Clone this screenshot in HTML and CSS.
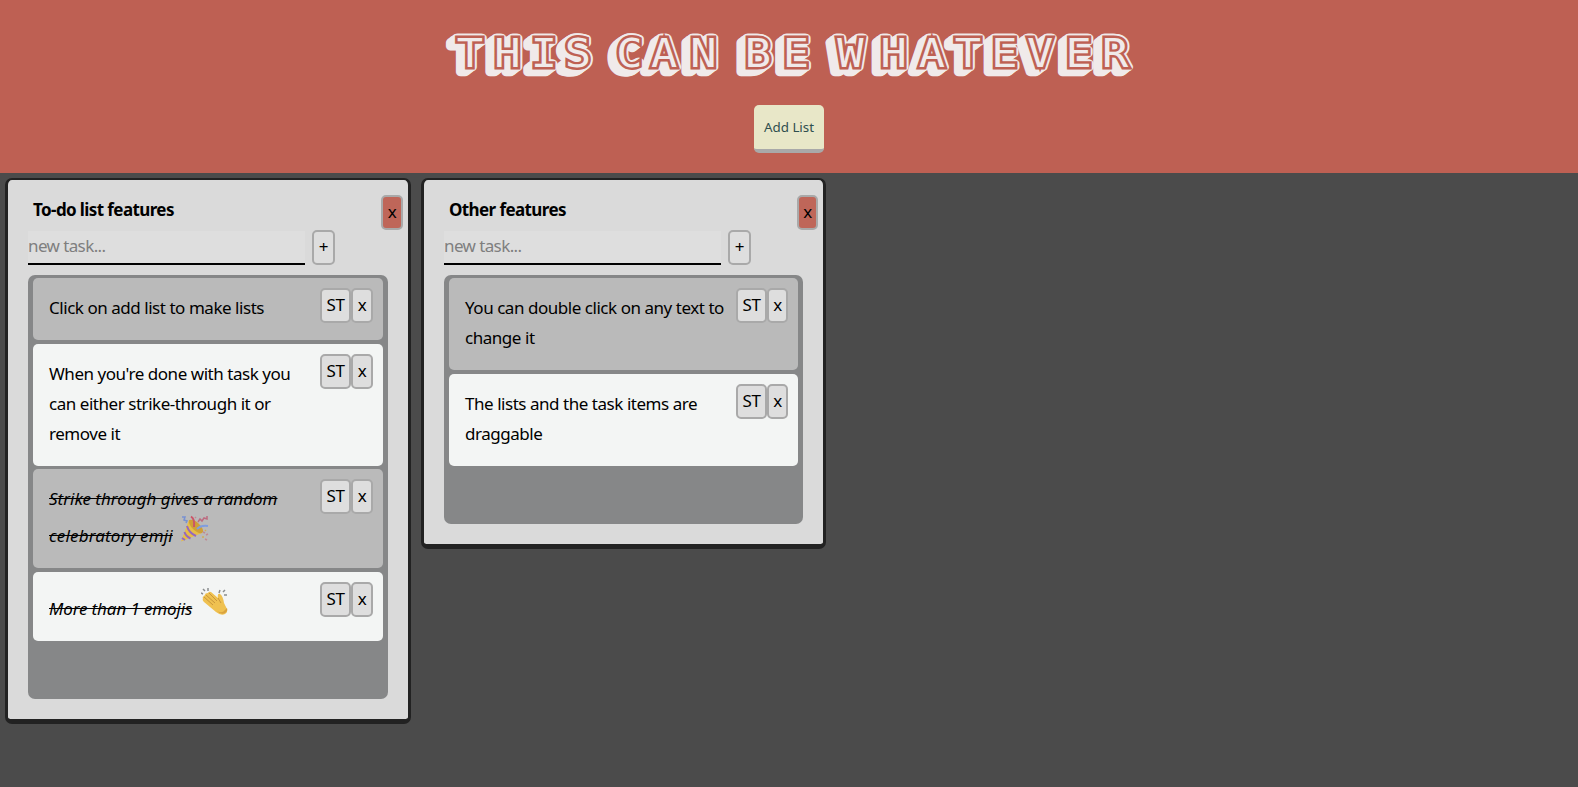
FILE: index.html
```html
<!DOCTYPE html>
<html lang="en">
<head>
<meta charset="utf-8">
<title>This can be whatever</title>
<link rel="stylesheet" href="styles.css">
</head>
<body>
<header class="header">
  <svg class="logo" width="700" height="60" viewBox="440 25 700 60" role="img">
    <defs>
      <g id="word" transform="scale(1.12 1)">
        <text y="66.8" x="419.5 453.1 485.7 516.1 540 562 592.9 628.1 650 676.8 710.7 740 759.4 797.8 832.1 864.3 896.9 928.6 963 995.6">THIS CAN BE WHATEVER</text>
      </g>
    </defs>
    <g class="shade">
      <use href="#word" x="-7" y="5.2"/><use href="#word" x="-6.500" y="4.6"/><use href="#word" x="-5.500" y="3.9"/><use href="#word" x="-4.500" y="3.3"/><use href="#word" x="-4" y="2.6"/><use href="#word" x="-3" y="2"/><use href="#word" x="-2" y="1.3"/><use href="#word" x="-1" y=".7"/><use href="#word"/>
    </g>
    <use class="face" href="#word"/>
  </svg>
  <button class="add-list">Add List</button>
</header>
<main class="board">
  <section class="list">
    <button class="btn btn-delete">x</button>
    <h2 class="list-title">To-do list features</h2>
    <form class="new-task"><input class="task-input" placeholder="new task..."><button class="btn btn-plus" type="button">+</button></form>
    <ul class="tasks">
      <li class="task"><div class="text"><p>Click on add list to make lists</p></div><div class="actions"><button class="btn btn-st">ST</button><button class="btn btn-x">x</button></div></li>
      <li class="task"><div class="text"><p>When you're done with task you</p><p>can either strike-through it or</p><p>remove it</p></div><div class="actions"><button class="btn btn-st">ST</button><button class="btn btn-x">x</button></div></li>
      <li class="task snug"><div class="text done"><p><s>Strike through gives a random</s></p><p class="with-emoji"><s>celebratory emji</s>
        <svg class="emoji party" width="28" height="27" viewBox="0 0 28 27">
          <path d="M0 26.5L8 5q9 3 13 13z" fill="#e6bd48"/>
          <path d="M8 5q6-1 11 5t2 8q-4 1-9-4T8 5z" fill="#cf9f38"/>
          <path d="M6 11q2 7 9 10M3.5 17q1 4 6 6.500M1 23l3 2" fill="none" stroke="#9468c0" stroke-width="2"/>
          <path d="M13 12Q14 4 10 1.500" fill="none" stroke="#cc5468" stroke-width="2"/>
          <path d="M16 14q4-4 11-3" fill="none" stroke="#7f9de0" stroke-width="2"/>
          <path d="M1 2h3l-1 3 3 1-1 2" fill="none" stroke="#7891d2" stroke-width="1.500"/>
          <path d="M17 7l2-3 2 2 2-3 3 1V1" fill="none" stroke="#bd6b80" stroke-width="1.500"/>
          <path d="M22 17l2 1M25 20l2-1M24 24l2 1M14 3l1-1" stroke="#c08a94" stroke-width="1.500"/>
          <path d="M21 22h2M24 15l1 1" stroke="#d0ac55" stroke-width="1.500"/>
        </svg></p></div><div class="actions"><button class="btn btn-st">ST</button><button class="btn btn-x">x</button></div></li>
      <li class="task"><div class="text done"><p class="with-emoji"><s class="tight">More than 1 emojis</s>
        <svg class="emoji" width="27" height="27" viewBox="0 0 27 27">
          <path d="M2 11q-1-2 1-3l1-1q0-2 3-2 1-2 3-1l7 6q-1-5 2-4 3 2 4 9l3 6q1 3-2 5-4 2-9-2L3 14q-2-2-1-3z" fill="#efc150"/>
          <path d="M3 9l9 8M5 7l9 8M8 5l8 8M17 10l3 5" fill="none" stroke="#c9963c" stroke-width="1"/>
          <path d="M16 23q5 3 8-1l2-2q1 3-2 5-4 2-8-2z" fill="#d9a23e"/>
          <path d="M0 5l2 1M2 1l2 2M7 0v3M19 2l-1 3M24 2l-2 2M26 7h-3" stroke="#8b8d8e" stroke-width="1.500"/>
        </svg></p></div><div class="actions"><button class="btn btn-st">ST</button><button class="btn btn-x">x</button></div></li>
    </ul>
  </section>
  <section class="list">
    <button class="btn btn-delete">x</button>
    <h2 class="list-title">Other features</h2>
    <form class="new-task"><input class="task-input" placeholder="new task..."><button class="btn btn-plus" type="button">+</button></form>
    <ul class="tasks">
      <li class="task"><div class="text"><p>You can double click on any text to</p><p>change it</p></div><div class="actions"><button class="btn btn-st">ST</button><button class="btn btn-x">x</button></div></li>
      <li class="task"><div class="text"><p>The lists and the task items are</p><p>draggable</p></div><div class="actions"><button class="btn btn-st">ST</button><button class="btn btn-x">x</button></div></li>
    </ul>
  </section>
</main>
</body>
</html>
```
FILE: styles.css
```css
* { box-sizing: border-box; margin: 0; padding: 0; }
body {
  min-height: 100vh;
  background: #4b4b4b;
  color: #000;
  font: 17px/30px "Noto Sans", sans-serif;
  letter-spacing: -0.46px;
}
button, input { font: inherit; letter-spacing: inherit; color: inherit; }
.header {
  display: flex;
  flex-direction: column;
  align-items: center;
  height: 173px;
  padding-top: 25px;
  background: #be6053;
}
.logo {
  display: block;
  margin-left: 2px;
  font: 39px "DejaVu Sans Mono", monospace;
  letter-spacing: 0;
  text-anchor: middle;
}
.shade { fill: #f0eaea; stroke: #f0eaea; stroke-width: 8.4px; stroke-linejoin: round; }
.face { fill: #f0eaea; stroke: #be6053; stroke-width: 4.8px; stroke-linejoin: miter; paint-order: stroke; }
.add-list {
  width: 70px;
  height: 48px;
  margin-top: 20px;
  border: 0;
  border-bottom: 4px solid #a9a9a9;
  border-radius: 5px;
  background: #e8e7c8;
  color: #2f4f4f;
  font-size: 13.33px;
  letter-spacing: 0;
}
.board { display: flex; align-items: flex-start; gap: 10px; padding: 5px; }
.list {
  position: relative;
  width: 406px;
  padding: 15px 20px 20px;
  border: 3px solid #222;
  border-width: 2px 3px 5px;
  border-radius: 7px;
  background: #dadada;
}
.list + .list { width: 405px; }
.list-title {
  height: 36px;
  padding-left: 5px;
  font-size: 17px;
  line-height: 29px;
  letter-spacing: -0.6px;
}
.new-task { display: flex; align-items: flex-start; gap: 7px; height: 44px; }
.btn {
  height: 35px;
  padding-bottom: 2px;
  border: 2px solid #a9a9a9;
  border-radius: 5px;
  background: #dedede;
  line-height: 28px;
  text-align: center;
}
.btn-delete { position: absolute; top: 15px; right: 5px; width: 22px; background: #bf6659; }
.list + .list .btn-delete { width: 21px; }
.btn-plus { width: 23px; margin-top: -1px; }
.btn-st { width: 31px; }
.btn-x { width: 22px; }
.list + .list .btn-x { width: 21px; }
.task-input {
  width: 277px;
  height: 34px;
  padding-bottom: 3px;
  border: 0;
  border-bottom: 2px solid #000;
  background: #dedede;
  letter-spacing: -0.6px;
}
.task-input::placeholder { color: #7f7f7f; opacity: 1; }
.tasks {
  display: flex;
  flex-direction: column;
  gap: 4px;
  padding: 3px 5px 58px;
  border-radius: 7px;
  background: #868788;
  list-style: none;
}
.task {
  display: flex;
  justify-content: space-between;
  padding: 10px 10px 16px 16px;
  border-radius: 5px;
  background: #f3f5f4;
}
.task:nth-child(odd) { background: #bababa; }
.snug { margin-top: -1px; }
.text { margin-bottom: 1px; padding-top: 5px; white-space: nowrap; }
.text p { height: 30px; }
.actions { display: flex; }
.done { font-style: italic; letter-spacing: 0; }
.text .with-emoji { display: flex; align-items: baseline; height: 37px; padding-top: 7px; letter-spacing: 0.15px; }
.with-emoji .tight { letter-spacing: -0.12px; }
.emoji { margin: -7px 0 0 9px; }
.party { margin-left: 8px; }
```
